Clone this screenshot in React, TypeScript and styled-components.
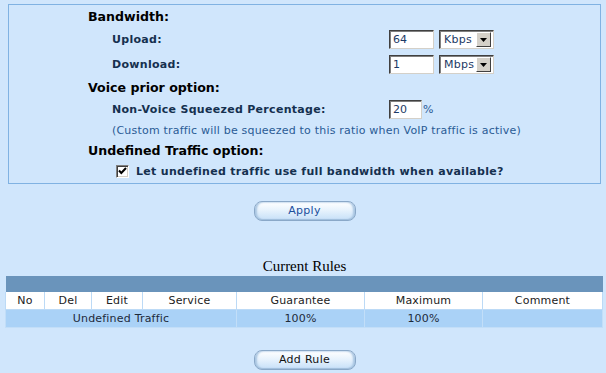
import React from 'react';
import styled, { createGlobalStyle } from 'styled-components';

const GlobalStyle = createGlobalStyle`
  html, body {
    margin: 0;
    padding: 0;
    background: #d0e6fc;
  }
  body {
    font-family: "DejaVu Sans", Verdana, sans-serif;
    font-size: 11px;
  }
`;

const Page = styled.div`
  width: 606px;
  height: 373px;
  background: #d0e6fc;
  padding-top: 4px;
  box-sizing: border-box;
  overflow: hidden;
`;

const Panel = styled.div`
  margin-left: 8px;
  width: 593px;
  height: 180px;
  box-sizing: border-box;
  border: 1px solid #80b2e2;
  padding: 0 0 0 79px;
  display: flex;
  flex-direction: column;
`;

const Heading = styled.div<{ $h: number }>`
  height: ${(p) => p.$h}px;
  display: flex;
  align-items: center;
  font-size: 12.6px;
  font-weight: bold;
  color: #000;
`;

const Row = styled.div<{ $h: number }>`
  height: ${(p) => p.$h}px;
  display: flex;
  align-items: center;
  padding-left: 24px;
`;

const Label = styled.span`
  width: 277px;
  font-weight: bold;
  color: #15304f;
  font-size: 11px;
  letter-spacing: 0.3px;
`;

const Note = styled.span`
  color: #2a5b95;
  font-size: 11px;
  letter-spacing: 0.2px;
`;

const TextBox = styled.div<{ $w: number }>`
  width: ${(p) => p.$w}px;
  height: 19px;
  box-sizing: border-box;
  background: #fff;
  border-style: solid;
  border-width: 1px;
  border-color: #404040 #d4d0c8 #d4d0c8 #404040;
  box-shadow: inset 1px 1px 0 #808080, inset -1px -1px 0 #fff;
  padding: 0 3px;
  display: flex;
  align-items: center;
  color: #1c3a66;
  font-size: 11px;
`;

const Select = styled.div`
  margin-left: 5px;
  width: 55px;
  height: 19px;
  box-sizing: border-box;
  background: #fff;
  border-style: solid;
  border-width: 1px;
  border-color: #404040 #d4d0c8 #d4d0c8 #404040;
  box-shadow: inset 1px 1px 0 #808080, inset -1px -1px 0 #fff;
  padding: 2px 2px 2px 4px;
  display: flex;
  align-items: center;
  justify-content: space-between;
  color: #1c3a66;
  font-size: 11px;
  letter-spacing: 0.3px;
`;

const DropBtn = styled.span`
  width: 15px;
  height: 15px;
  box-sizing: border-box;
  background: #d4d0c8;
  border-style: solid;
  border-width: 1px;
  border-color: #fff #404040 #404040 #fff;
  display: flex;
  align-items: center;
  justify-content: center;
`;

const Percent = styled.span`
  margin-left: 1px;
  color: #2a5b95;
`;

const Check = styled.span`
  width: 13px;
  height: 13px;
  box-sizing: border-box;
  background: #fff;
  border-style: solid;
  border-width: 1px;
  border-color: #808080 #fff #fff #808080;
  box-shadow: inset 1px 1px 0 #404040, inset -1px -1px 0 #d4d0c8;
  display: flex;
  align-items: center;
  justify-content: center;
  margin: 0 7px 0 4px;
`;

const CheckLabel = styled.span`
  font-weight: bold;
  color: #15304f;
  letter-spacing: 0.3px;
`;

const ButtonRow = styled.div<{ $top: number }>`
  margin-top: ${(p) => p.$top}px;
  display: flex;
  justify-content: center;
  padding-left: 3px;
`;

const PillButton = styled.button<{ $color: string }>`
  width: 102px;
  height: 20px;
  border-radius: 8px;
  border: 1px solid #8aa8c8;
  background: linear-gradient(#ffffff 0%, #e8f3fd 45%, #c6e0f8 100%);
  box-shadow: inset 2px 0 2px #a9c6e2, inset -2px 0 2px #a9c6e2, inset 0 -1px 0 #9ebbd8;
  color: ${(p) => p.$color};
  font-family: "DejaVu Sans", Verdana, sans-serif;
  font-size: 11px;
  letter-spacing: 0.3px;
  padding: 0;
  line-height: 18px;
`;

const Caption = styled.div`
  margin-top: 36px;
  text-align: center;
  font-family: "Liberation Serif", "Times New Roman", serif;
  font-size: 15px;
  color: #000;
  height: 18px;
  line-height: 18px;
  padding-left: 3px;
`;

const RulesTable = styled.table`
  margin: 1px 0 0 5px;
  width: 597px;
  border-collapse: collapse;
  table-layout: fixed;
  font-size: 11px;
  letter-spacing: 0.2px;
`;

const BarCell = styled.td`
  height: 16px;
  padding: 0;
  background: #6a94bb;
`;

const HeadCell = styled.td`
  height: 17px;
  padding: 0;
  background: #fff;
  text-align: center;
  color: #222;
  border: 1px solid #bcdaf6;
  border-top: none;
`;

const DataCell = styled.td`
  height: 17px;
  padding: 0;
  background: #aad2f7;
  text-align: center;
  color: #1d2a3a;
  border: 1px solid #c2def8;
`;

const cols = [39, 47, 51, 94, 128, 118, 120];
const heads = ['No', 'Del', 'Edit', 'Service', 'Guarantee', 'Maximum', 'Comment'];

const Arrow = () => (
  <svg width="7" height="4" viewBox="0 0 7 4">
    <path d="M0 0H7L3.5 4Z" fill="#000" />
  </svg>
);

const Tick = () => (
  <svg width="9" height="8" viewBox="0 0 9 8">
    <path d="M1 3.5L3.3 6L8 1" stroke="#000" strokeWidth="2" fill="none" />
  </svg>
);

const UnitSelect = ({ value }: { value: string }) => (
  <Select>
    <span>{value}</span>
    <DropBtn>
      <Arrow />
    </DropBtn>
  </Select>
);

export default function App() {
  return (
    <Page>
      <GlobalStyle />
      <Panel>
        <Heading $h={22}>Bandwidth:</Heading>
        <Row $h={25}>
          <Label>Upload:</Label>
          <TextBox $w={45}>64</TextBox>
          <UnitSelect value="Kbps" />
        </Row>
        <Row $h={25}>
          <Label>Download:</Label>
          <TextBox $w={45}>1</TextBox>
          <UnitSelect value="Mbps" />
        </Row>
        <Heading $h={20}>Voice prior option:</Heading>
        <Row $h={25}>
          <Label>Non-Voice Squeezed Percentage:</Label>
          <TextBox $w={33}>20</TextBox>
          <Percent>%</Percent>
        </Row>
        <Row $h={17}>
          <Note>(Custom traffic will be squeezed to this ratio when VoIP traffic is active)</Note>
        </Row>
        <Heading $h={22}>Undefined Traffic option:</Heading>
        <Row $h={20}>
          <Check>
            <Tick />
          </Check>
          <CheckLabel>Let undefined traffic use full bandwidth when available?</CheckLabel>
        </Row>
      </Panel>
      <ButtonRow $top={17}>
        <PillButton $color="#1b4f9c">Apply</PillButton>
      </ButtonRow>
      <Caption>Current Rules</Caption>
      <RulesTable>
        <colgroup>
          {cols.map((w, i) => (
            <col key={i} style={{ width: w }} />
          ))}
        </colgroup>
        <tbody>
          <tr>
            <BarCell colSpan={7} />
          </tr>
          <tr>
            {heads.map((h) => (
              <HeadCell key={h}>{h}</HeadCell>
            ))}
          </tr>
          <tr>
            <DataCell colSpan={4}>Undefined Traffic</DataCell>
            <DataCell>100%</DataCell>
            <DataCell>100%</DataCell>
            <DataCell />
          </tr>
        </tbody>
      </RulesTable>
      <ButtonRow $top={22}>
        <PillButton $color="#111">Add Rule</PillButton>
      </ButtonRow>
    </Page>
  );
}
